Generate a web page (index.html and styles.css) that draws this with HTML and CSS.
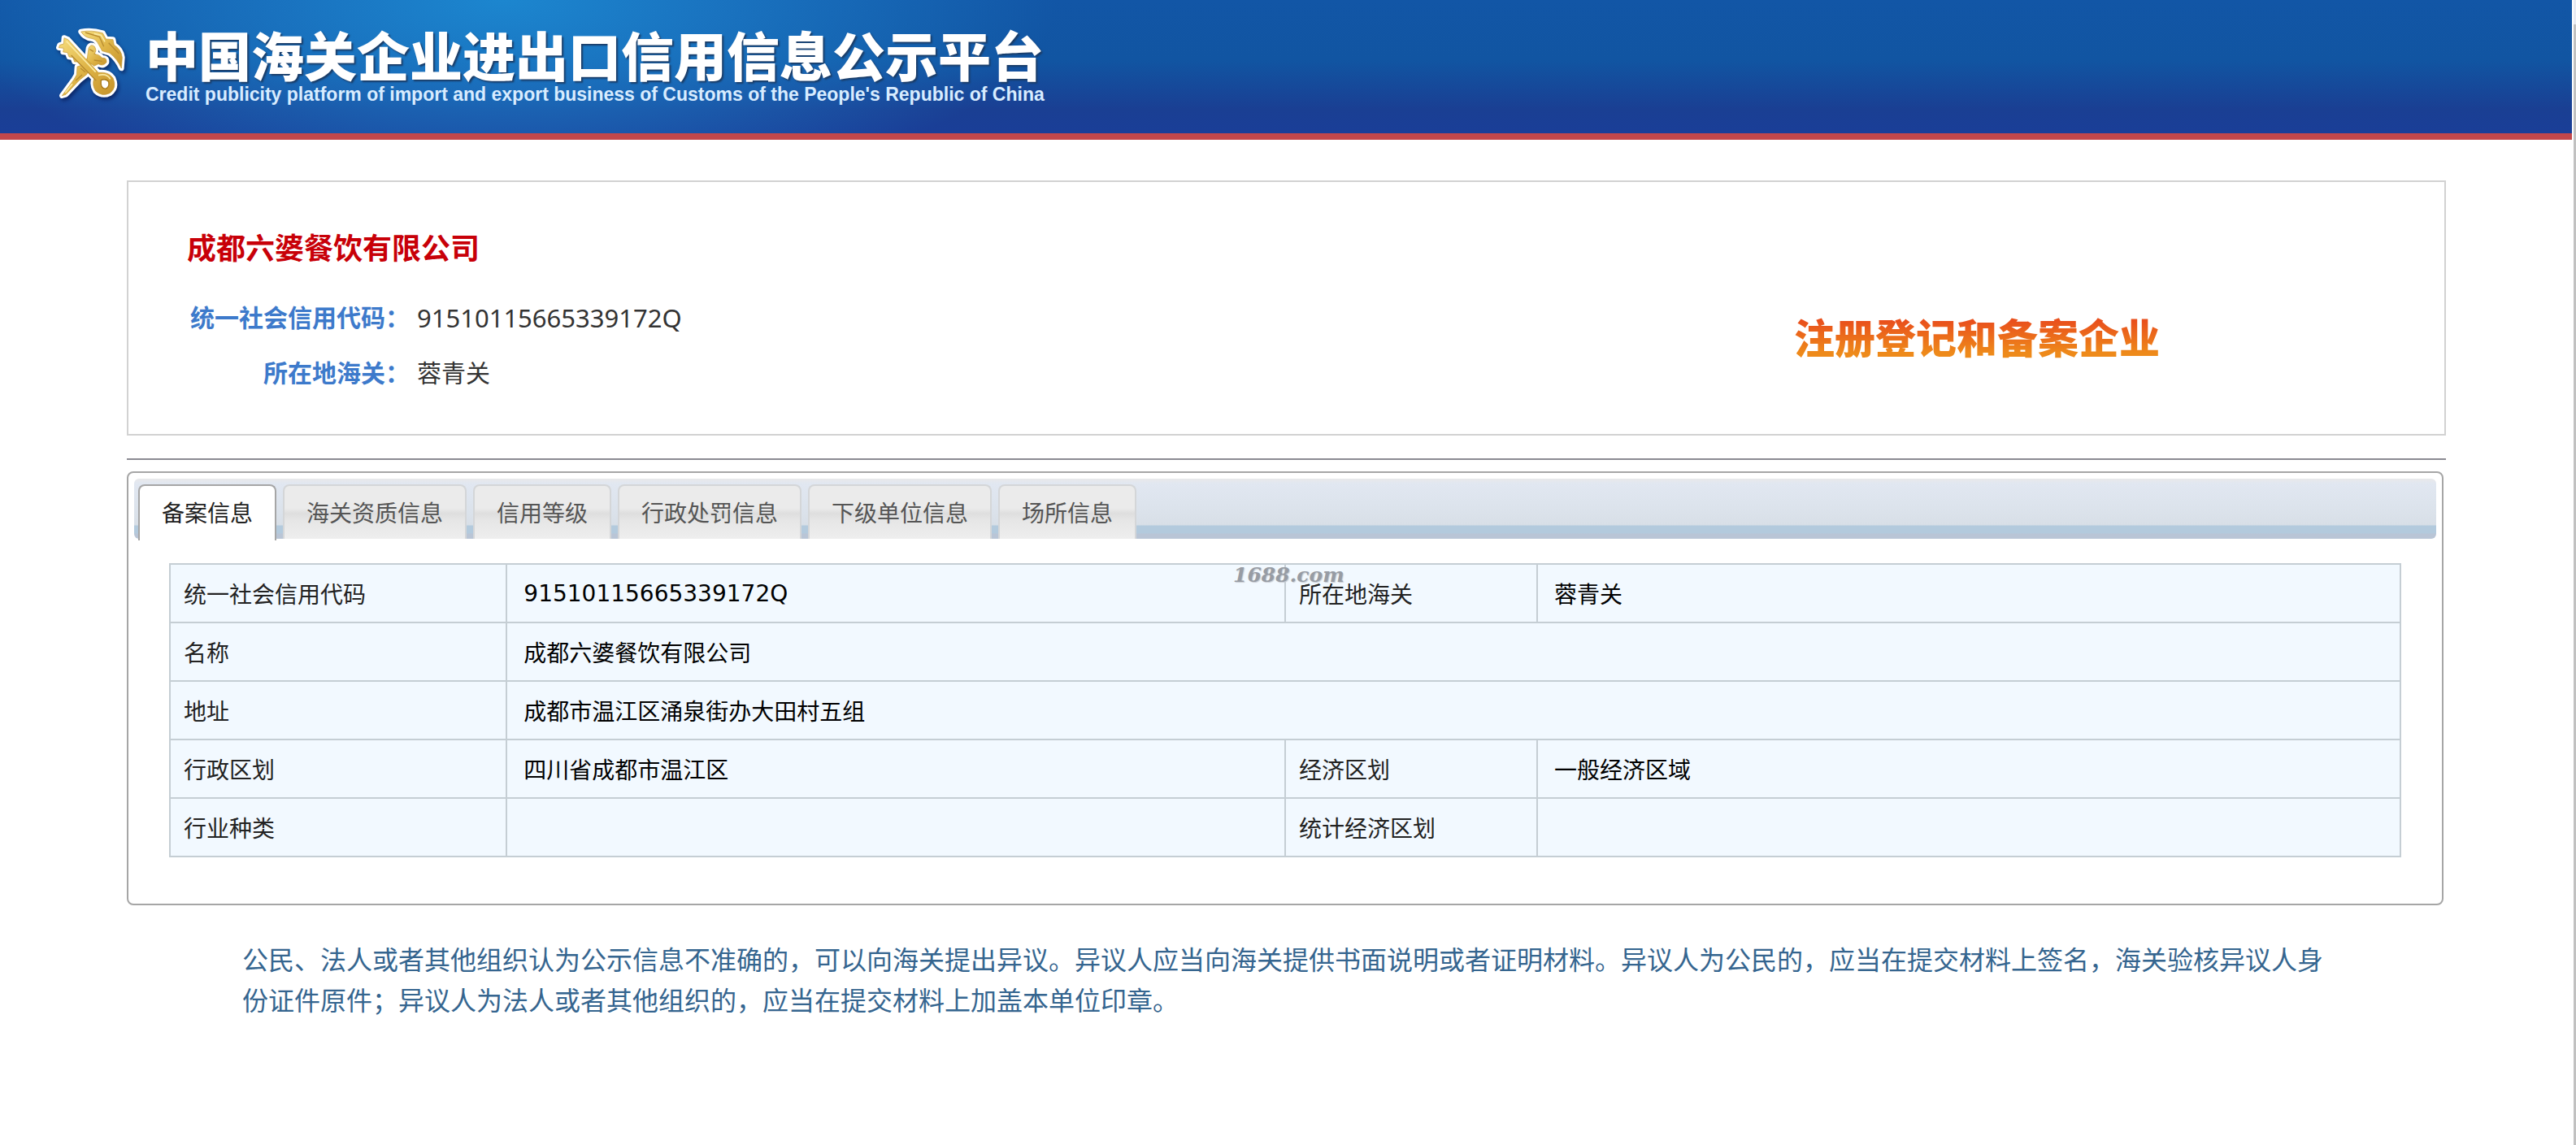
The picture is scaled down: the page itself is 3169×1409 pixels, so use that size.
FILE: index.html
```html
<!DOCTYPE html>
<html lang="zh-CN">
<head>
    <meta charset="UTF-8">
    <meta name="viewport" content="width=device-width, initial-scale=1.0">
    <title>中国海关企业进出口信用信息公示平台</title>
    <link rel="stylesheet" href="styles.css">
</head>
<body>
    <header class="header">
        <svg class="logo" viewBox="50 40 270 270" aria-hidden="true">
            <defs>
                <linearGradient id="gold" x1="0" y1="0" x2="1" y2="1">
                    <stop offset="0" stop-color="#f6dc7c"/>
                    <stop offset="0.5" stop-color="#dfb548"/>
                    <stop offset="1" stop-color="#c6932a"/>
                </linearGradient>
                <g id="emblem">
                    <!-- staff -->
                    <path d="M78 291 L122 231 L132 214 L134 184 L152 178 L190 128 L204 140 L178 190 L170 212 L142 234 L92 287 Z"/>
                    <path d="M176 116 Q184 98 198 110 Q208 126 196 138 Q216 138 226 152 Q244 150 242 168 Q230 184 212 174 L196 182 L170 160 Z"/>
                    <!-- wings -->
                    <path d="M148 55 Q188 48 228 60 L240 82 L266 84 L270 104 Q296 120 300 150 L297 190 Q282 156 254 134 L226 126 L214 104 Q204 82 186 80 Q160 76 148 55 Z"/>
                    <!-- key -->
                    <path d="M86 78 L100 84 L212 206 Q250 202 266 226 Q282 262 254 282 Q226 296 202 274 Q188 252 196 228 L136 166 L124 166 L118 150 L104 148 L98 132 L82 130 L84 116 L66 114 L70 104 L84 100 Z"/>
                </g>
            </defs>
            <use href="#emblem" class="logo-outline"/>
            <use href="#emblem" class="logo-gold"/>
            <path class="logo-hole" d="M222 234 Q240 226 250 240 Q254 260 238 266 Q218 264 222 234 Z"/>
            <path class="logo-shade" d="M112 142 L204 236 M152 214 L128 236 M164 58 L216 74 L232 110 M250 96 L288 136 M180 120 L194 128 M196 160 L226 164 M146 190 L164 204"/>
            <path class="logo-light" d="M94 90 L202 204 M116 248 L90 280 M196 62 L222 68 L236 92 M212 216 Q244 208 256 230"/>
        </svg>
        <div class="brand">
            <h1>中国海关企业进出口信用信息公示平台</h1>
            <p>Credit publicity platform of import and export business of Customs of the People's Republic of China</p>
        </div>
    </header>

    <main class="main-container">
        <section class="company">
            <div class="company-info">
                <h2>成都六婆餐饮有限公司</h2>
                <dl>
                    <dt>统一社会信用代码：</dt>
                    <dd class="code">91510115665339172Q</dd>
                    <dt>所在地海关：</dt>
                    <dd>蓉青关</dd>
                </dl>
            </div>
            <div class="company-type"><span>注册登记和备案企业</span></div>
        </section>

        <hr>

        <section class="panel">
            <div class="tabs" role="tablist">
                <button type="button" role="tab" class="tab active" aria-selected="true">备案信息</button>
                <button type="button" role="tab" class="tab">海关资质信息</button>
                <button type="button" role="tab" class="tab">信用等级</button>
                <button type="button" role="tab" class="tab">行政处罚信息</button>
                <button type="button" role="tab" class="tab">下级单位信息</button>
                <button type="button" role="tab" class="tab">场所信息</button>
            </div>
            <div class="tab-content">
                <table class="info-table">
                    <colgroup>
                        <col class="col-label">
                        <col class="col-value">
                        <col class="col-label2">
                        <col>
                    </colgroup>
                    <tr>
                        <th>统一社会信用代码</th>
                        <td>91510115665339172Q</td>
                        <th>所在地海关</th>
                        <td>蓉青关</td>
                    </tr>
                    <tr>
                        <th>名称</th>
                        <td colspan="3">成都六婆餐饮有限公司</td>
                    </tr>
                    <tr>
                        <th>地址</th>
                        <td colspan="3">成都市温江区涌泉街办大田村五组</td>
                    </tr>
                    <tr>
                        <th>行政区划</th>
                        <td>四川省成都市温江区</td>
                        <th>经济区划</th>
                        <td>一般经济区域</td>
                    </tr>
                    <tr>
                        <th>行业种类</th>
                        <td></td>
                        <th>统计经济区划</th>
                        <td></td>
                    </tr>
                </table>
                <span class="watermark">1688.com</span>
            </div>
        </section>

        <p class="notice">公民、法人或者其他组织认为公示信息不准确的，可以向海关提出异议。异议人应当向海关提供书面说明或者证明材料。异议人为公民的，应当在提交材料上签名，海关验核异议人身份证件原件；异议人为法人或者其他组织的，应当在提交材料上加盖本单位印章。</p>
    </main>
    <div class="scrollbar"></div>
</body>
</html>
```

FILE: styles.css
```css
* {
    box-sizing: border-box;
}

body {
    margin: 0;
    padding-right: 5px;
    background: #fff;
    font-family: "Noto Sans", "Noto Sans CJK SC", sans-serif;
    font-size: 28px;
    color: #222;
}

h1, h2, p, dl, dd {
    margin: 0;
}

.header {
    display: flex;
    align-items: center;
    gap: 22px;
    height: 172px;
    padding: 0 67px 6px;
    border-bottom: 8px solid #c2474b;
    background:
        radial-gradient(ellipse 680px 250px at 620px 0, #1c86cf 0%, rgba(28, 124, 200, 0.75) 40%, rgba(20, 90, 170, 0) 100%),
        linear-gradient(#1256a6 0%, #1155a2 45%, #1a3f93 82%, #1a3e98 100%);
}

.logo {
    width: 90px;
    height: 90px;
    filter: drop-shadow(2px 3px 2px rgba(0, 0, 50, 0.5));
}

.logo-outline {
    fill: #fff;
    stroke: #fff;
    stroke-width: 20;
    stroke-linejoin: round;
}

.logo-gold {
    fill: url(#gold);
    stroke: #c39838;
    stroke-width: 2;
}

.logo-hole {
    fill: #fff;
    stroke: #a87918;
    stroke-width: 4;
}

.logo-shade,
.logo-light {
    fill: none;
    stroke: #b88c30;
    stroke-width: 4;
}

.logo-light {
    stroke: #fbeaa2;
    stroke-width: 5;
}

.brand h1 {
    font-family: "Noto Sans CJK SC", sans-serif;
    font-size: 65px;
    font-weight: 900;
    line-height: 72px;
    color: #fff;
    text-shadow: 2px 2px 2px #1b3c66;
    white-space: nowrap;
}

.brand p {
    margin-top: 2px;
    font-family: "Liberation Sans", sans-serif;
    font-size: 23px;
    font-weight: bold;
    line-height: 24px;
    color: #d8ecff;
    white-space: nowrap;
}

.main-container {
    padding: 50px 155px 0 156px;
}

.company {
    display: flex;
    justify-content: space-between;
    height: 314px;
    padding: 56px 350px 0 72px;
    border: 2px solid #d2d2d2;
}

.company h2 {
    font-size: 36px;
    line-height: 52px;
    color: #c80008;
}

.company dl {
    display: grid;
    grid-template-columns: 274px auto;
    column-gap: 9px;
    margin-top: 25px;
    font-size: 30px;
    line-height: 68px;
    color: #333;
}

.company dt {
    font-weight: bold;
    text-align: right;
    white-space: nowrap;
    color: #3d7acb;
}

.company .code {
    font-size: 31px;
}

.company-type {
    padding-top: 97px;
    font-family: "Noto Sans CJK SC", sans-serif;
    font-size: 50px;
    font-weight: 900;
    line-height: 72px;
}

.company-type span {
    background: linear-gradient(#e9501c 25%, #ee8a1a 80%);
    -webkit-background-clip: text;
    background-clip: text;
    color: transparent;
}

hr {
    height: 2px;
    margin: 28px 0 14px;
    border: none;
    background: #8b8a92;
}

.panel {
    margin-right: 3px;
    padding: 7px;
    border: 2px solid #a6a6a6;
    border-radius: 8px;
}

.tabs {
    display: flex;
    align-items: flex-start;
    gap: 8px;
    height: 74px;
    padding: 7px 5px 0;
    border-radius: 6px;
    background: linear-gradient(#e9e9ea 0, #e1e7f1 6px, #dde4ed 30px, #d8dfe7 57px, #b3cadd 58px, #b3cadd 67px, #b9c5d6 68px);
}

.tab {
    height: 67px;
    padding: 0 27px 2px;
    border: 2px solid #d4d6d8;
    border-bottom: none;
    border-radius: 8px 8px 0 0;
    background: linear-gradient(#ebebeb 0%, #ebebeb 42%, #dedede 52%, #e6e6e6 65%, #eee 100%);
    font-family: inherit;
    font-size: 28px;
    color: #555;
    cursor: pointer;
}

.tab.active {
    height: 69px;
    padding-bottom: 4px;
    border-color: #a6a6a6;
    background: #fff;
    color: #222;
}

.tab-content {
    position: relative;
    padding: 30px 43px 50px;
}

.info-table {
    width: 100%;
    border-collapse: collapse;
    table-layout: fixed;
    background: #f2f9ff;
    font-family: "DejaVu Sans", "Noto Sans CJK SC", sans-serif;
}

.col-label {
    width: 15.1%;
}

.col-value {
    width: 34.9%;
}

.col-label2 {
    width: 11.3%;
}

.info-table th,
.info-table td {
    height: 72px;
    padding: 0 20px;
    border: 2px solid #c5ced4;
    text-align: left;
    color: #000;
}

.info-table th {
    padding: 0 16px;
    font-weight: normal;
    color: #222;
}

.watermark {
    position: absolute;
    top: 30px;
    left: 1352px;
    font-family: "DejaVu Serif", serif;
    font-size: 25px;
    font-style: italic;
    font-weight: bold;
    color: #979ca4;
    text-shadow: 1px 1px 1px #c8ccd2;
}

.notice {
    padding: 42px 142px 0;
    font-size: 32px;
    line-height: 50px;
    color: #35658f;
}

.scrollbar {
    position: absolute;
    top: 0;
    right: 0;
    bottom: 0;
    width: 3px;
    border-top: 30px solid #e9ebf2;
    background: #c1c1c1;
}
```
